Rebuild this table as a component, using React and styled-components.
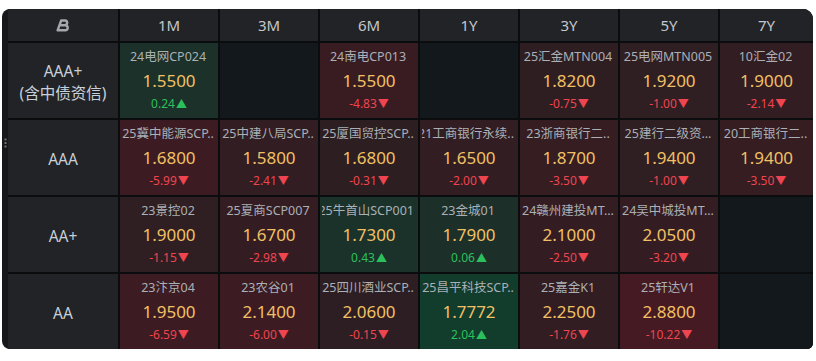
import styled, { createGlobalStyle } from 'styled-components'

const GlobalStyle = createGlobalStyle`
  html, body {
    margin: 0;
    padding: 0;
    background: #ffffff;
  }
  body {
    font-family: 'Noto Sans', 'Noto Sans CJK SC', sans-serif;
  }
`

const TENORS = ['1M', '3M', '6M', '1Y', '3Y', '5Y', '7Y']

const rows = [
  {
    label: ['AAA+', '(含中债资信)'],
    cells: [
      { name: '24电网CP024', value: '1.5500', chg: 0.24 },
      null,
      { name: '24南电CP013', value: '1.5500', chg: -4.83 },
      null,
      { name: '25汇金MTN004', value: '1.8200', chg: -0.75 },
      { name: '25电网MTN005', value: '1.9200', chg: -1.0 },
      { name: '10汇金02', value: '1.9000', chg: -2.14 },
    ],
  },
  {
    label: ['AAA'],
    cells: [
      { name: '25冀中能源SCP..', value: '1.6800', chg: -5.99 },
      { name: '25中建八局SCP..', value: '1.5800', chg: -2.41 },
      { name: '25厦国贸控SCP..', value: '1.6800', chg: -0.31 },
      { name: '21工商银行永续..', value: '1.6500', chg: -2.0 },
      { name: '23浙商银行二..', value: '1.8700', chg: -3.5 },
      { name: '25建行二级资...', value: '1.9400', chg: -1.0 },
      { name: '20工商银行二..', value: '1.9400', chg: -3.5 },
    ],
  },
  {
    label: ['AA+'],
    cells: [
      { name: '23景控02', value: '1.9000', chg: -1.15 },
      { name: '25夏商SCP007', value: '1.6700', chg: -2.98 },
      { name: '25牛首山SCP001', value: '1.7300', chg: 0.43 },
      { name: '23金城01', value: '1.7900', chg: 0.06 },
      { name: '24赣州建投MT...', value: '2.1000', chg: -2.5 },
      { name: '24吴中城投MT...', value: '2.0500', chg: -3.2 },
      null,
    ],
  },
  {
    label: ['AA'],
    cells: [
      { name: '23汴京04', value: '1.9500', chg: -6.59 },
      { name: '23农谷01', value: '2.1400', chg: -6.0 },
      { name: '25四川酒业SCP..', value: '2.0600', chg: -0.15 },
      { name: '25昌平科技SCP..', value: '1.7772', chg: 2.04 },
      { name: '25嘉金K1', value: '2.2500', chg: -1.76 },
      { name: '25轩达V1', value: '2.8800', chg: -10.22 },
      null,
    ],
  },
]

// cell tint grows with the size of the move
const tint = (chg) => {
  if (chg >= 0) {
    const k = Math.min(chg / 2, 1)
    return `rgb(${Math.round(28 - 10 * k)}, ${Math.round(47 + 13 * k)}, ${Math.round(41 + 3 * k)})`
  }
  const k = Math.min(-chg / 10, 1)
  return `rgb(${Math.round(44 + 26 * k)}, ${Math.round(30 - 4 * k)}, 34)`
}

const Frame = styled.div`
  margin: 9px 3px 0 2px;
  display: flex;
  background: #17181a;
  border-radius: 8px 10px 6px 8px;
  overflow: hidden;
`

const Handle = styled.div`
  width: 6px;
  flex-shrink: 0;
  display: flex;
  justify-content: center;
  align-items: flex-start;
  padding-top: 129px;
`

const Grid = styled.div`
  flex: 1;
  display: grid;
  grid-template-columns: 110px repeat(6, 98px) 1fr;
  grid-template-rows: 32px repeat(4, 75px);
  gap: 2px;
  background: #0b0c0d;
`

const HeadCell = styled.div`
  background: #222326;
  color: #c4c7cb;
  font-size: 15px;
  display: flex;
  align-items: center;
  justify-content: center;
`

const RowLabel = styled.div`
  background: #222326;
  color: #c8d0d9;
  font-size: 15.5px;
  line-height: 22px;
  display: flex;
  flex-direction: column;
  align-items: center;
  justify-content: center;
  padding-top: 2px;
`

const Cell = styled.div`
  background: ${(p) => p.$bg || '#13181d'};
  display: flex;
  flex-direction: column;
  align-items: stretch;
  justify-content: center;
  min-width: 0;
  padding-bottom: 1px;
`

const NameBox = styled.div`
  direction: rtl;
  display: flex;
  overflow: hidden;
  margin: 0 4px 0 2px;
  height: 18px;
  line-height: 18px;
`

const Name = styled.span`
  direction: ltr;
  margin: 0 auto;
  flex-shrink: 0;
  white-space: nowrap;
  color: #aab0b6;
  font-size: 12.5px;
`

const Value = styled.div`
  text-align: center;
  color: #f2c063;
  font-size: 17px;
  line-height: 24px;
  margin-top: 3px;
`

const Change = styled.div`
  text-align: center;
  color: ${(p) => (p.$up ? '#2cc05c' : '#ef4550')};
  font-size: 12px;
  line-height: 18px;
  margin-top: 2px;
`

const Arrow = styled.span`
  font-size: 11px;
  margin-left: 1px;
`

const Logo = () => (
  <svg width="14" height="13" viewBox="0 0 14 13">
    <path
      d="M5.2 1.5 H9.2 a2.3 2.3 0 0 1 0.3 4.5 M4.6 6.2 H9.6 a2.6 2.6 0 0 1 0 5.1 H1.6 L5.2 1.5"
      fill="none"
      stroke="#a4a7ab"
      strokeWidth="2.4"
      strokeLinejoin="round"
      strokeLinecap="round"
    />
  </svg>
)

const Grip = () => (
  <svg width="3" height="10" viewBox="0 0 3 10">
    <rect x="0.5" y="0.5" width="2" height="2" fill="#707378" />
    <rect x="0.5" y="4" width="2" height="2" fill="#707378" />
    <rect x="0.5" y="7.5" width="2" height="2" fill="#707378" />
  </svg>
)

const Quote = ({ item }) => {
  if (!item) return <Cell />
  const up = item.chg >= 0
  return (
    <Cell $bg={tint(item.chg)}>
      <NameBox>
        <Name>{item.name}</Name>
      </NameBox>
      <Value>{item.value}</Value>
      <Change $up={up}>
        {item.chg.toFixed(2)}
        <Arrow>{up ? '▲' : '▼'}</Arrow>
      </Change>
    </Cell>
  )
}

export default function App() {
  return (
    <>
      <GlobalStyle />
      <Frame>
        <Handle>
          <Grip />
        </Handle>
        <Grid>
          <HeadCell>
            <Logo />
          </HeadCell>
          {TENORS.map((t) => (
            <HeadCell key={t}>{t}</HeadCell>
          ))}
          {rows.map((row) => [
            <RowLabel key={row.label[0]}>
              {row.label.map((l) => (
                <span key={l}>{l}</span>
              ))}
            </RowLabel>,
            ...row.cells.map((c, i) => <Quote key={row.label[0] + i} item={c} />),
          ])}
        </Grid>
      </Frame>
    </>
  )
}
